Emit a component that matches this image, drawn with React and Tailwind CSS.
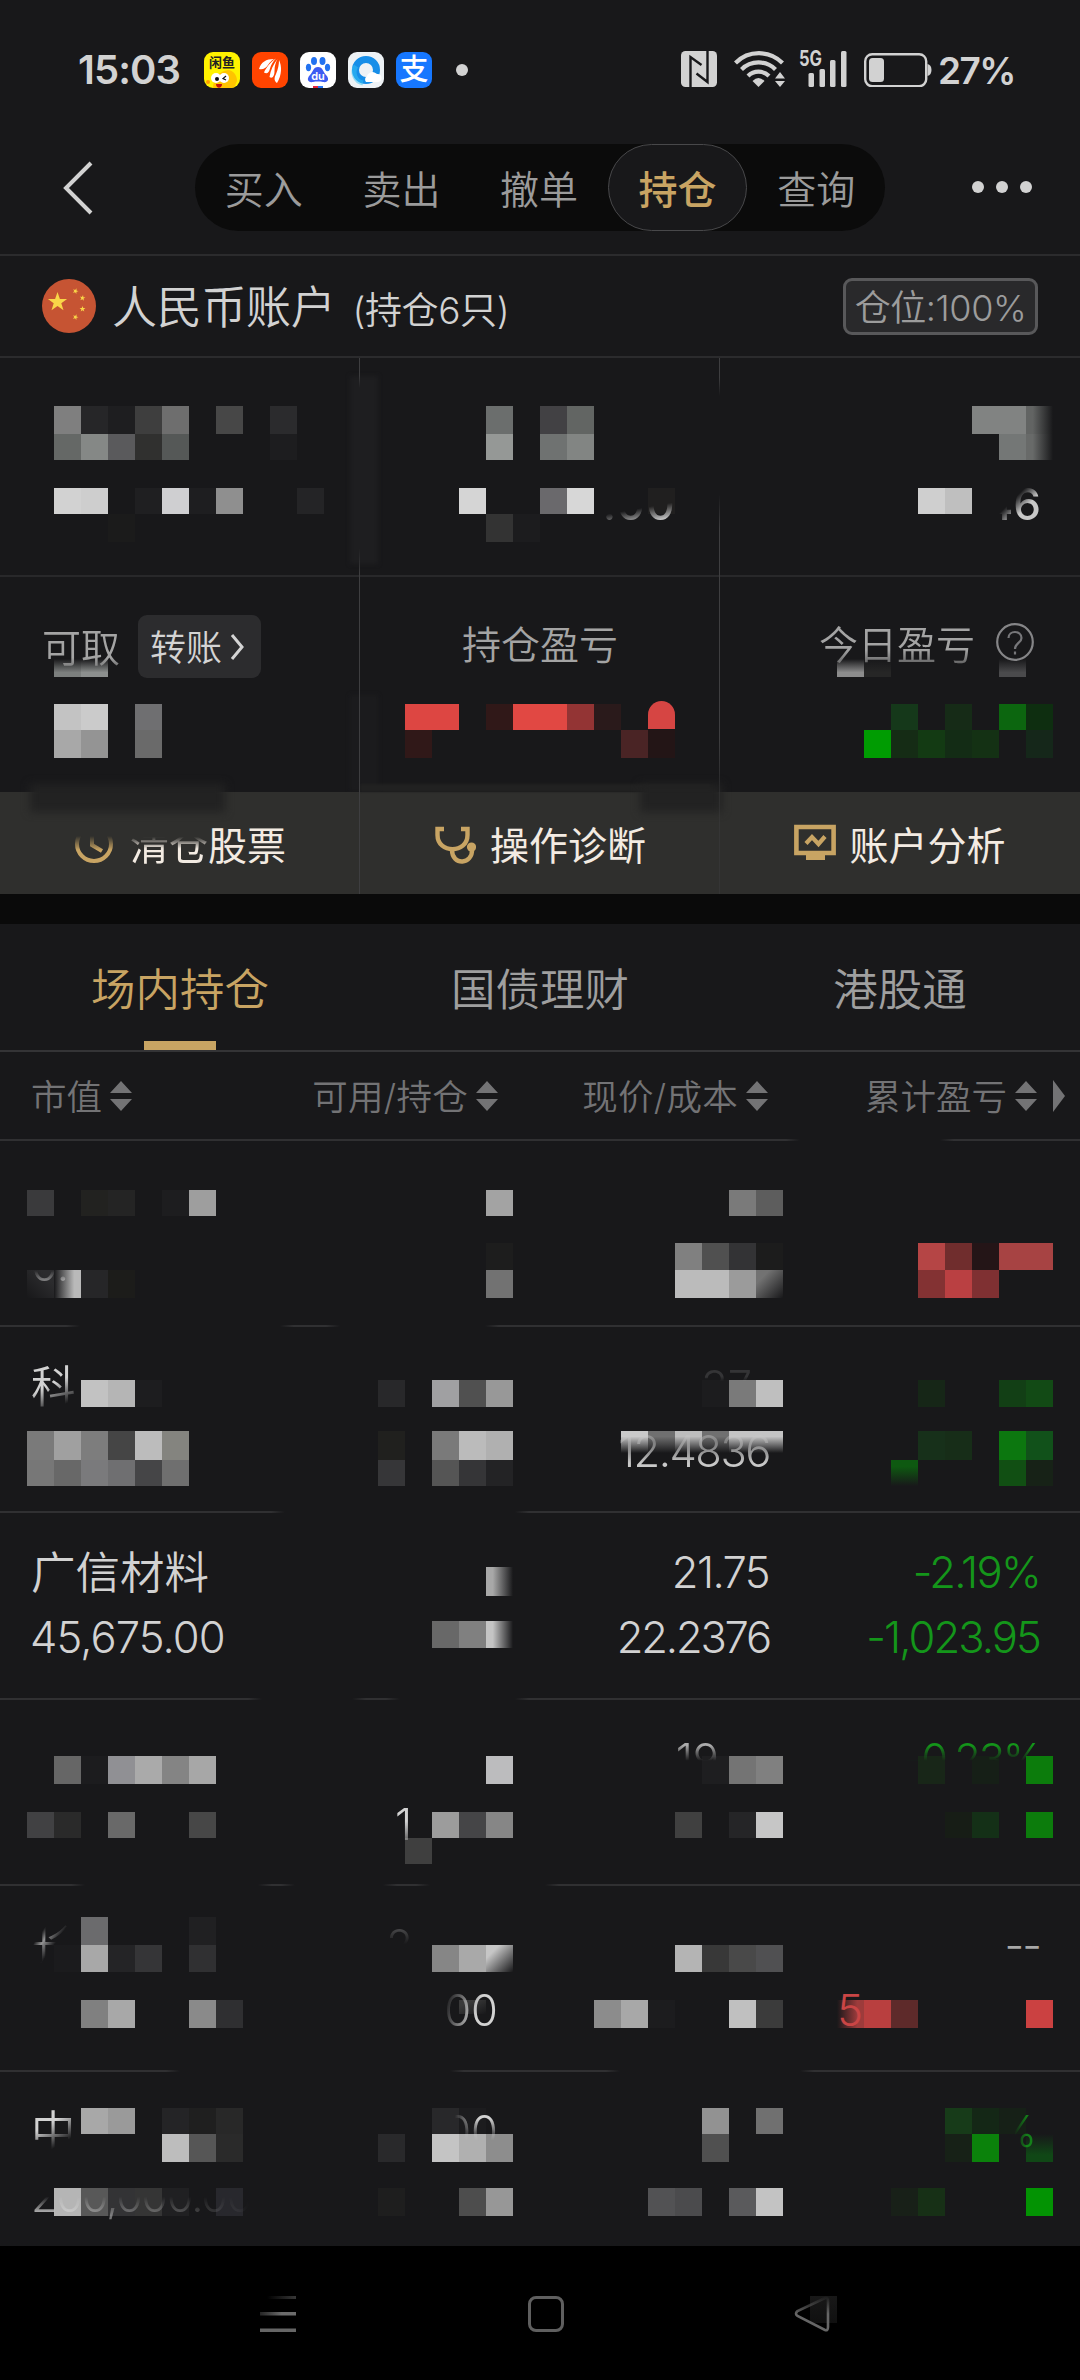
const CELL = 27;

const FADES = {
  r: 'to right',
  l: 'to left',
  t: 'to top',
  b: 'to bottom',
  d: 'to bottom right',
  e: 'to bottom left',
};

// strips: [top, height, first column, "hex hex/fade - hex"]
function Mosaic({ strips }) {
  return (
    <div className="pointer-events-none absolute inset-0">
      {strips.map(([top, height, col, colors]) =>
        colors.split(' ').map((token, i) => {
          if (token === '-') return null;
          const [hex, fade] = token.split('/');
          return (
            <div
              key={`${top}-${col + i}`}
              className="absolute"
              style={{
                left: (col + i) * CELL,
                top,
                width: CELL,
                height,
                background: fade ? `linear-gradient(${FADES[fade]}, #${hex} 25%, transparent)` : `#${hex}`,
              }}
            />
          );
        })
      )}
    </div>
  );
}

// horizontal rule that is only visible in the given [from, to] ranges
function Rule({ ranges = [[0, 1080]] }) {
  const stops = ranges.flatMap(([a, b]) => [
    `transparent ${a === 0 ? -1 : a}px`,
    `#303032 ${a === 0 ? 0 : a + 14}px`,
    `#303032 ${b === 1080 ? 1080 : b - 14}px`,
    `transparent ${b === 1080 ? 1081 : b}px`,
  ]);
  return (
    <div
      className="absolute inset-x-0 top-0 h-[2px]"
      style={{ backgroundImage: `linear-gradient(to right, ${stops.join(', ')})` }}
    />
  );
}

function StatusBar() {
  return (
    <div className="flex h-[144px] items-start pt-[51px] text-[#d2d2d2]">
      <div className="ml-[78px] w-[126px] text-[40px] leading-[37px] font-semibold tracking-[-0.9px]">15:03</div>
      <div className="flex gap-3 pt-px">
        <div className="h-9 w-9 overflow-hidden rounded-[9px] bg-[#fff200]">
          <div className="pt-[3px] text-center text-[13px] leading-[15px] font-bold text-[#222]">闲鱼</div>
          <svg viewBox="0 0 36 18" className="block h-[18px] w-9">
            <path d="M9 18C9 9 15 1 24 0c5 0 9 5 9 11l-3 7z" fill="#ffc400" />
            <circle cx="4" cy="12" r="2" fill="#ff9d00" />
            <circle cx="12" cy="8" r="5" fill="#fff" />
            <circle cx="20" cy="8" r="5" fill="#fff" />
            <circle cx="13" cy="9" r="2" fill="#111" />
            <path d="M22 6l-3 2.5 3 1.5" fill="none" stroke="#111" strokeWidth="1.2" />
            <path d="M12 14h6c0 5-6 5-6 0z" fill="#c4120c" />
          </svg>
        </div>
        <svg viewBox="0 0 36 36" className="h-9 w-9 rounded-[9px] bg-[#ff4400]">
          <g fill="#fff">
            <path d="M22 7C14 7 9 10 7 17c4 1 7-1 9-4 2-3 3-4 6-6z" />
            <path d="M24 6.500c-5 3-10 9-12 14 3 2 5 0 6-4 1-4 3-7 6-10z" />
            <path d="M25.500 7c-4 5-7 11-8 18 3 2 5-1 5-6 0-5 1-8 3-12z" />
            <path d="M27 8c3 6 3 15-2 23-3-2-3-5-1-9 2-5 3-9 3-14z" />
          </g>
        </svg>
        <svg viewBox="0 0 36 36" className="h-9 w-9 rounded-[9px] bg-white">
          <g fill="#2272f0">
            <ellipse cx="14" cy="9" rx="3" ry="4" />
            <ellipse cx="22.500" cy="9" rx="3" ry="4" />
            <ellipse cx="8.500" cy="15.500" rx="2.600" ry="3.700" />
            <ellipse cx="27.500" cy="15.500" rx="2.600" ry="3.700" />
          </g>
          <path d="M18 15c5 0 5 5 8 8 4 4 2 8-3 7-3-.6-7-.6-10 0-5 1-7-3-3-7 3-3 3-8 8-8z" fill="#3d5cf2" />
          <text x="18" y="28" textAnchor="middle" fontSize="11" fontWeight="600" fill="#fff">du</text>
          <path d="M13 34h5v2h-5z" fill="#e3223b" />
          <path d="M18 34h5v2h-5z" fill="#2272f0" />
        </svg>
        <svg viewBox="0 0 36 36" className="h-9 w-9 rounded-[9px] bg-[#eef2f5]">
          <circle cx="18" cy="18" r="10.500" fill="none" stroke="#178ee8" strokeWidth="7" />
          <path d="M8 14a11 11 0 0 0 7 17" fill="none" stroke="#35c3f5" strokeWidth="5" opacity=".5" />
          <path d="M18 30a4 4 0 0 1 1-6 6 6 0 0 1 10-2 4 4 0 0 1 1 8z" fill="#fff" />
        </svg>
        <div className="h-9 w-9 rounded-[9px] bg-[#1677ff] text-center text-[29px] leading-[35px] font-medium text-white">支</div>
      </div>
      <div className="mt-[13px] ml-6 h-3 w-3 rounded-full bg-[#d2d2d2]" />

      <svg viewBox="0 0 36 36" className="ml-[213px] h-9 w-9">
        <rect width="36" height="36" rx="4.500" fill="#d2d2d2" />
        <path d="M9.500 36V6l11 8M26.500 0v31l-11-8.500" fill="none" stroke="#18181a" strokeWidth="2.400" />
      </svg>
      <svg viewBox="0 0 52 36" className="ml-[17px] h-9 w-[52px]">
        <g fill="none" stroke="#d2d2d2" strokeWidth="4.200">
          <path d="M1.500 12a33 33 0 0 1 47 0" />
          <path d="M7.500 18.500a24 24 0 0 1 34 0" />
          <path d="M14 25a15 15 0 0 1 21 0" />
        </g>
        <path d="M24.500 36l-6-6q6-6 12 0z" fill="#d2d2d2" />
        <path d="M46 21l5 6.500H41zM46 36l5-6H41z" fill="#d2d2d2" />
      </svg>
      <svg viewBox="0 0 48 38" className="-mt-px ml-[13px] h-[38px] w-12 overflow-visible">
        <text x="0" y="16" fontSize="21" fontWeight="700" textLength="23" lengthAdjust="spacingAndGlyphs" fill="#d2d2d2">5G</text>
        <g fill="#d2d2d2">
          <rect x="9.500" y="23" width="5.500" height="14" rx="1.500" />
          <rect x="20.500" y="19" width="5.500" height="18" rx="1.500" />
          <rect x="31" y="10" width="5.500" height="27" rx="1.500" />
          <rect x="42" y="1" width="5.500" height="36" rx="1.500" />
        </g>
      </svg>
      <svg viewBox="0 0 68 36" className="ml-[17px] h-9 w-[68px]">
        <rect x="1.200" y="3.200" width="61" height="32" rx="7" fill="none" stroke="#d2d2d2" strokeWidth="2.400" />
        <rect x="5" y="7" width="15" height="24" rx="3.500" fill="#d2d2d2" />
        <path d="M63.500 13q4 1 4 6t-4 6z" fill="#d2d2d2" />
      </svg>
      <div className="ml-[6px] text-[37px] leading-[39px] font-semibold tracking-[-1.6px]">27%</div>
    </div>
  );
}

const NAV = ['买入', '卖出', '撤单', '持仓', '查询'];

function NavBar() {
  return (
    <div className="flex h-[110px] items-start">
      <svg viewBox="0 0 36 60" className="mt-[13px] ml-[60px] h-[60px] w-9">
        <path d="M31 6L6 31l25 25" fill="none" stroke="#d2d2d2" strokeWidth="4" />
      </svg>
      <div className="ml-[99px] flex h-[87px] w-[690px] rounded-full bg-[#0b0b0b]">
        {NAV.map(item => (
          <div
            key={item}
            className={
              item === '持仓'
                ? 'h-[87px] flex-1 rounded-full border border-[#48484a] bg-[#18181a] text-center text-[39px] leading-[90px] font-medium text-[#c8a463]'
                : 'h-[87px] flex-1 text-center text-[39px] leading-[92px] font-[350] text-[#9b9b9b]'
            }
          >
            {item}
          </div>
        ))}
      </div>
      <div className="mt-[37px] ml-[87px] flex gap-3">
        <div className="h-3 w-3 rounded-full bg-[#d2d2d2]" />
        <div className="h-3 w-3 rounded-full bg-[#d2d2d2]" />
        <div className="h-3 w-3 rounded-full bg-[#d2d2d2]" />
      </div>
    </div>
  );
}

const STAR = 'M0-10l2.400 7h7.200l-5.800 4.300 2.200 7L0 4l-6 4.300 2.200-7L-9.600-3h7.200z';

function Account() {
  return (
    <div className="flex h-[104px] items-center border-y-2 border-[#2b2b2d] pr-[42px] pl-[42px]">
      <svg viewBox="0 0 54 54" className="h-[54px] w-[54px]">
        <circle cx="27" cy="27" r="27" fill="#c65433" />
        <g fill="#f9d648">
          <path d={STAR} transform="translate(15.500 23)" />
          <path d={STAR} transform="translate(33.500 12) rotate(20) scale(.3)" />
          <path d={STAR} transform="translate(40.500 19) rotate(10) scale(.3)" />
          <path d={STAR} transform="translate(40.500 30) scale(.3)" />
          <path d={STAR} transform="translate(33.500 38) rotate(20) scale(.3)" />
        </g>
      </svg>
      <div className="mt-[5px] ml-4 flex items-baseline font-[350] text-[#d2d2d2]">
        <span className="text-[45px] leading-[60px] tracking-[-0.3px]">人民币账户</span>
        <span className="ml-[17px] text-[37px] tracking-[-0.4px]">(持仓6只)</span>
      </div>
      <div className="ml-auto h-[57px] w-[195px] rounded-[9px] border-[3px] border-[#58585a] bg-[#29292b] text-center text-[36px] leading-[55px] font-[350] tracking-[-0.4px] whitespace-nowrap text-[#9c9c9c]">
        仓位:100%
      </div>
    </div>
  );
}

const FUNDS = [
  [48, 28, 2, '7f7f7f 262628 1e1e20 3e3e3e 6e6e6e - 474747 - 2b2b2d'],
  [48, 28, 18, '6b6e6d - 424144 626563'],
  [48, 28, 36, '818382 818382 626463/r'],
  [76, 26, 2, '656866 858886 5a5a5c 30302f 555857 - - - 1d1d1f'],
  [76, 26, 18, '959896 - 6f7271 828583'],
  [76, 26, 37, '747776 686a69/r'],
  [130, 26, 2, 'd2d2d2 cecece - 1f1f21 cfcfd1 1e1e20 8f8f8f - - 242426'],
  [130, 26, 17, 'd5d5d5 - - 6a696c d7d7d7 - - 201f1f'],
  [130, 26, 34, 'cfcfcf bfbfbf'],
  [156, 28, 4, '1b1b1b'],
  [156, 28, 18, '333333 1c1c1e'],
];

const PROFITS = [
  [84, 18, 2, '7c7f7e/t 8c8f8e/t'],
  [84, 18, 31, '8c8c8c/t 262626/t'],
  [84, 18, 37, '4a4a4c/t'],
  [129, 26, 2, 'c3c3c3 cbcbcb - 6f6f71'],
  [129, 26, 15, 'dd4642 dd4642 - 301818 e14843 e14843 933434 2a1a1b'],
  [129, 26, 33, '15381a - 162b17 - 0c660f 0e2e10'],
  [155, 28, 2, 'a8a8a8 949494 - 6a6a6a'],
  [155, 28, 15, '301818 - - - - - - - 4a2425 231516'],
  [155, 28, 32, '009c02 152c15 133a13 132c15 143114 - 15271a'],
];

function Summary() {
  return (
    <div className="relative">
      <div className="relative grid h-[217px] grid-cols-3">
        <Mosaic strips={FUNDS} />
        <div className="pointer-events-none absolute top-[18px] left-[350px] h-[188px] w-7 bg-[#1e1e20] blur-[2px]" />
        <div />
        <div className="flex items-start justify-end pt-[117px] pr-[44px]">
          <span className="text-[44px] leading-[58px] font-medium tracking-[1.4px] text-[#c8c8c8] [mask-image:linear-gradient(170deg,transparent_56%,black_78%)]">
            .00
          </span>
        </div>
        <div className="flex items-start justify-end pt-[117px] pr-[39px]">
          <span className="text-[44px] leading-[58px] font-medium text-[#c8c8c8] [mask-image:linear-gradient(135deg,transparent_52%,black_68%)]">
            .46
          </span>
        </div>
      </div>

      <div className="relative grid h-[217px] grid-cols-3 text-[39px] leading-[48px] font-[350] text-[#a4a4a4]">
        <div className="absolute inset-x-0 top-0 h-[2px] bg-[#28282a]" />
        <Mosaic strips={PROFITS} />
        <div className="absolute top-[126px] left-[648px] h-7 w-[27px] rounded-t-full bg-[#d64543]" />
        <div className="absolute top-[120px] left-[350px] h-[96px] w-7 bg-[#1e1e20]/60 blur-[2px]" />
        <div className="relative flex items-start pt-[40px] pl-[42px]">
          <span className="mt-[9px] [mask-image:linear-gradient(to_bottom,black_70%,#0009_90%)]">可取</span>
          <div className="ml-[18px] flex h-[63px] w-[123px] items-center rounded-[9px] bg-[#2c2c2e] pt-0.5 pl-3 text-[36px] text-[#d4d4d4]">
            转账
            <svg viewBox="0 0 14 26" className="mb-0.5 ml-[8px] h-[26px] w-[14px]">
              <path d="M2 1l10 12L2 25" fill="none" stroke="#d4d4d4" strokeWidth="3" />
            </svg>
          </div>
        </div>
        <div className="relative pt-[46px] text-center">持仓盈亏</div>
        <div className="relative flex items-start justify-end pt-[46px] pr-[46px]">
          <span className="[mask-image:linear-gradient(to_bottom,black_60%,#0008_90%)]">今日盈亏</span>
          <svg viewBox="0 0 38 38" className="mt-[2px] ml-[21px] h-[38px] w-[38px]">
            <circle cx="19" cy="19" r="17.800" fill="none" stroke="#858587" strokeWidth="2.200" />
            <path d="M12.500 15c0-8 13-8 13 0 0 5-6.500 5-6.500 11M19 28.500v3" fill="none" stroke="#77777a" strokeWidth="2.200" />
          </svg>
        </div>
      </div>

      <div className="relative grid h-[102px] grid-cols-3 bg-[#2f2f2d] text-[39px] leading-[46px] font-normal text-[#f3ebe2]">
        <div className="absolute -top-2 left-[30px] h-7 w-[195px] bg-[#222222] blur-[4px]" />
        <div className="absolute -top-2 left-[360px] h-2 w-[350px] bg-[#212121] blur-[1px]" />
        <div className="absolute -top-2 left-[640px] h-7 w-[82px] bg-[#222222] blur-[4px]" />
        <div className="relative flex items-center justify-center gap-4 pt-[6px]">
          <svg viewBox="0 0 40 40" className="mb-1 h-10 w-10 [mask-image:linear-gradient(to_bottom,transparent_30%,black_65%)]">
            <path d="M20 3a17 17 0 1 0 17 17A17 17 0 0 0 20 3zM18 11v10l10 6" fill="none" stroke="#c8a463" strokeWidth="4" />
          </svg>
          <div>
            <span className="inline-block [mask-image:linear-gradient(to_bottom,transparent_30%,black_56%)]">清仓</span>
            <span>股票</span>
          </div>
        </div>
        <div className="relative flex items-center justify-center gap-[14px] pt-[5px]">
          <svg viewBox="0 0 42 40" className="mb-1 h-10 w-[42px]">
            <g fill="none" stroke="#c8a463" strokeWidth="4.400">
              <path d="M10 5H3.500v6c0 19 30 19 30 0V5H27" />
              <path d="M18 26c0 16 21 15 20-1" />
            </g>
            <circle cx="37.500" cy="23" r="4.600" fill="#c8a463" />
          </svg>
          <span>操作诊断</span>
        </div>
        <div className="relative flex items-center justify-center gap-[13px] pt-[5px]">
          <svg viewBox="0 0 42 36" className="-mt-2 h-9 w-[42px]">
            <path d="M2.400 3h37.200v26H2.400z" fill="none" stroke="#c8a463" strokeWidth="4.600" />
            <path d="M12 31h19v5H12z" fill="#c8a463" />
            <path d="M12 19.500l6-6.500 6.500 7 6.500-7.500" fill="none" stroke="#c8a463" strokeWidth="4.200" />
          </svg>
          <span>账户分析</span>
        </div>
      </div>

      <div className="absolute top-0 left-[359px] h-[536px] w-px bg-[#3e3e40] [mask-image:linear-gradient(to_bottom,black_18px,transparent_30px,transparent_190px,black_215px)]" />
      <div className="absolute top-0 left-[719px] h-[536px] w-px bg-[#3e3e40] [mask-image:linear-gradient(to_bottom,black_20px,transparent_38px,transparent_136px,black_170px,black_380px,#0006_430px)]" />
    </div>
  );
}

const TABS = ['场内持仓', '国债理财', '港股通'];

function Tabs() {
  return (
    <div className="grid h-[126px] shrink-0 grid-cols-3 text-center text-[44.5px] leading-[132px] font-[350] text-[#9f9f9f]">
      {TABS.map((tab, i) => (
        <div key={tab} className={i === 0 ? 'relative h-[126px] text-[#c8a463]' : 'h-[126px]'}>
          {tab}
          {i === 0 && <div className="absolute bottom-0 left-[144px] h-[9px] w-[72px] bg-[#c8a463]" />}
        </div>
      ))}
    </div>
  );
}

const HEADERS = ['市值', '可用/持仓', '现价/成本', '累计盈亏'];

function TableHeader() {
  return (
    <div className="relative flex h-[89px] shrink-0 items-center border-t-2 border-[#343436] pt-1 pl-[31px]">
      <div className="grid grid-cols-[186px_281px_270px_269px] text-[35.5px] leading-[44px] font-[350] text-[#737375]">
        {HEADERS.map((label, i) => (
          <div key={label} className={i === 0 ? 'flex items-center gap-2' : 'flex items-center justify-end gap-2'}>
            <span className={i > 0 && i < 3 ? 'tracking-[0.3px] whitespace-nowrap' : ''}>{label}</span>
            <svg viewBox="0 0 22 30" className="mb-1 h-[30px] w-[22px]">
              <path d="M11 0l11 12H0zM11 30L0 18h22z" fill="#737375" />
            </svg>
          </div>
        ))}
      </div>
      <svg viewBox="0 0 12 32" className="mb-1 ml-4 h-8 w-3">
        <path d="M0 0l12 16L0 32z" fill="#737375" />
      </svg>
    </div>
  );
}

const UP = 'text-[#c94545]';
const DOWN = 'text-[#14961a]';

// eight cells a row: name, available, price, profit / value, held, cost, amount
const ROWS = [
  {
    rule: [[0, 800], [940, 1080]],
    cells: [
      null,
      null,
      null,
      null,
      { text: '0.', mask: 'opacity-50 [mask-image:linear-gradient(to_bottom,transparent_58%,black_72%)]' },
      null,
      null,
      null,
    ],
    strips: [
      [51, 26, 1, '3a3a3c - 222220 242424 - 1d1d1f 9e9e9e'],
      [51, 26, 18, 'a3a3a3'],
      [51, 26, 27, '7a7a7a 5d5d5d'],
      [104, 27, 18, '1d1d1d'],
      [104, 27, 25, '808080 505050 333335 1c1c1c'],
      [104, 27, 34, 'b54545 702d2d 241517 a74343 a74343'],
      [131, 28, 1, '2c2c2e/e b9b9b9/l 262628 1c1c1a'],
      [131, 28, 18, '727272'],
      [131, 28, 25, 'bbbbbb bbbbbb 9b9b9b 727272/d'],
      [131, 28, 34, '833233 ba4042 7f3032'],
    ],
  },
  {
    rule: [[0, 80], [280, 340], [485, 1080]],
    cells: [
      { text: '科', mask: '[mask-image:linear-gradient(155deg,black_46%,transparent_76%)]' },
      null,
      { text: '.37', mask: 'mr-4 opacity-15 [mask-image:linear-gradient(to_bottom,black_35%,transparent_42%)]' },
      null,
      null,
      null,
      { text: '12.4836', color: 'text-[#c9c9c9]', mask: '-mr-0.5 tracking-[-1.5px] [mask-image:linear-gradient(to_bottom,#0006_35%,black_68%)]' },
      null,
    ],
    strips: [
      [55, 27, 3, 'c2c2c2 b5b5b5 1d1d1f'],
      [55, 27, 14, '28282a - a0a0a2 505050 989898'],
      [55, 27, 26, '1c1c1e 7a7a7a bfbfbf'],
      [55, 27, 34, '162617 - - 123f15 124a15'],
      [106, 29, 1, '7a7a7a a0a0a0 7d7d7d 454545 bcbcbc 84847f'],
      [106, 29, 14, '20201e - 7a7a7a bbbbbb b0b0b0'],
      [106, 22, 23, 'c9c9c9/b 707070/b bdbdbd/b 707070/b c4c4c4/b c4c4c4/b'],
      [106, 29, 34, '17301a 172d18 - 0c770f 11511a'],
      [135, 26, 1, '777777 686868 7a7a7c 6f6f71 454547 6f6f6f'],
      [135, 26, 14, '363638 - 555555 353537 232325'],
      [135, 26, 33, '0e5911/b - - - 114f13 172217'],
    ],
  },
  {
    rule: [[0, 285], [515, 1080]],
    cells: [
      { text: '广信材料' },
      null,
      { text: '21.75', mask: '-mr-px tracking-[-1.6px]' },
      { text: '-2.19%', color: DOWN, mask: '-mr-[3px] tracking-[-1.7px]' },
      { text: '45,675.00', mask: '-ml-px tracking-[-0.9px]' },
      null,
      { text: '22.2376', mask: '-mr-0.5 tracking-[-2.2px]' },
      { text: '-1,023.95', color: DOWN, mask: '-mr-[3px] tracking-[-1.9px]' },
    ],
    strips: [
      [56, 29, 18, 'a8a8a8/r'],
      [110, 27, 16, '686868 808080 c4c4c4/r'],
    ],
  },
  {
    rule: [[0, 262], [352, 400], [515, 1080]],
    cells: [
      null,
      null,
      { text: '19', mask: 'mr-[49px] [mask-image:linear-gradient(to_bottom,#000c_28%,transparent_52%)]' },
      { text: '-0.23%', color: DOWN, mask: '-mr-1 tracking-[-2.4px] [mask-image:linear-gradient(to_bottom,black_28%,transparent_52%)]' },
      null,
      { text: '1', mask: 'mr-[86px] [mask-image:linear-gradient(to_bottom,black_45%,#0006_75%)]' },
      null,
      null,
    ],
    strips: [
      [58, 28, 2, '666666 1c1c1e 909094 aaaaaa 848484 a7a7a7'],
      [58, 28, 18, 'bcbcbe'],
      [58, 28, 26, '1e1e20 747474 808080'],
      [58, 28, 34, '182618 - 161f17 - 0c7c0c'],
      [114, 26, 1, '414143 2a2a2a - 696969 - - 474747'],
      [114, 26, 16, '9c9c9c 454547 868686'],
      [114, 26, 25, '404040 - 252527 c6c6c6'],
      [114, 26, 35, '171d16 143017 - 0c7c0c'],
      [140, 26, 15, '3f3f3f'],
    ],
  },
  {
    rule: [[0, 85], [258, 295], [383, 430], [545, 1080]],
    cells: [
      { text: '长', mask: '[mask-image:linear-gradient(125deg,transparent_26%,#000a_35%,transparent_50%)]' },
      { text: '2', mask: 'mr-[85px] opacity-30 [mask-image:linear-gradient(to_bottom,black_20%,transparent_48%)]' },
      null,
      { text: '--', color: 'text-[#a8a8a8]', mask: 'tracking-[-2px] -mr-[3px]' },
      null,
      { text: '00', mask: '[mask-image:linear-gradient(105deg,transparent_10%,black_60%)]' },
      null,
      { text: '5', color: UP, mask: 'mr-[174px]' },
    ],
    strips: [
      [33, 28, 3, '6b6b6d - - - 202022'],
      [61, 27, 2, '1b1b1d a8a8a8 242426 353537 - 303032'],
      [61, 27, 16, '868686 a9a9a9 c6c6c6/d'],
      [61, 27, 25, 'b4b4b4 383838 494949 505052'],
      [116, 28, 3, '808080 a8a8a8 - - 8a8a8a 2f2f31'],
      [116, 14, 17, '3a3a3a/d'],
      [116, 28, 22, '8c8c8c a8a8a8 1c1c1e - - c0c0c0 3b3b3b'],
      [116, 28, 31, '9d3b3b/l b93f3f 5e2a2a'],
      [116, 28, 38, 'cb4141'],
    ],
  },
  {
    rule: [[0, 180], [450, 620], [800, 1080]],
    cells: [
      { text: '中', mask: '[mask-image:linear-gradient(150deg,black_38%,transparent_68%)]' },
      { text: '00', mask: '[mask-image:linear-gradient(to_bottom,black_30%,transparent_64%),linear-gradient(to_right,transparent_20%,black_60%)] [mask-composite:intersect]' },
      null,
      { text: '%', color: DOWN, mask: 'opacity-80 [mask-image:linear-gradient(to_right,transparent_45%,black_75%)]' },
      { text: '200,000.00', mask: 'tracking-[-1.4px] [mask-image:linear-gradient(to_bottom,transparent_50%,black_80%),linear-gradient(to_right,black_10%,#0008_30%,#0005_70%,transparent)] [mask-composite:intersect]' },
      null,
      null,
      null,
    ],
    strips: [
      [38, 26, 3, 'a8a8a8 9a9a9a - 242426 1f1f1f 282828'],
      [38, 26, 16, '28282a 1c1c1e'],
      [38, 26, 26, '929292 - 707070'],
      [38, 26, 35, '173b19 142716 162017'],
      [64, 28, 6, 'bdbdbd 565656 2a2a2a'],
      [64, 28, 14, '29292b - c4c4c4 b0b0b0 8d8d8d'],
      [64, 28, 26, '505050'],
      [64, 28, 35, '172117 0b820b - 104716/t'],
      [118, 28, 2, 'b5b5b5 585858 333335 353535 202022 - 28282d'],
      [118, 28, 14, '1e1e1e - - 4d4d4d 979797'],
      [118, 28, 24, '525254 4b4b4d - 5a5a5c c3c3c3'],
      [118, 28, 33, '182018 173016'],
      [118, 28, 38, '039303'],
    ],
  },
];

function Row({ rule, cells, strips }) {
  return (
    <div className="relative h-[186.200px] shrink-0 pt-[29px] pl-[31px]">
      <Rule ranges={rule} />
      <Mosaic strips={strips} />
      <div className="relative grid auto-rows-[65px] grid-cols-[186px_281px_270px_269px] text-[43.5px] leading-[65px] font-[350]">
        {cells.map((cell, i) => (
          <div key={i} className={i % 4 === 0 ? 'text-left whitespace-nowrap' : 'text-right whitespace-nowrap'}>
            {cell && (
              <span
                className={`inline-block ${i === 0 ? 'pt-px text-[44.5px]' : ''} ${cell.color || 'text-[#d2d2d2]'} ${cell.mask || ''}`}
              >
                {cell.text}
              </span>
            )}
          </div>
        ))}
      </div>
    </div>
  );
}

function SystemNav() {
  return (
    <div className="relative flex h-[134px] shrink-0 items-start bg-black pt-[48px]">
      <svg viewBox="0 0 36 40" className="ml-[260px] h-10 w-9">
        <defs>
          <linearGradient id="menuFade" x1="0" x2="1">
            <stop offset=".2" stopColor="#5c5c5c" stopOpacity="0" />
            <stop offset="1" stopColor="#5c5c5c" stopOpacity=".6" />
          </linearGradient>
          <linearGradient id="menuFade2" x1="0" x2="1">
            <stop offset="0" stopColor="#5c5c5c" stopOpacity=".4" />
            <stop offset=".6" stopColor="#6c6c6c" />
          </linearGradient>
        </defs>
        <rect y="2" width="36" height="3" fill="url(#menuFade)" />
        <rect y="18" width="36" height="3.500" fill="url(#menuFade2)" />
        <rect y="34.500" width="36" height="3.500" fill="#666" />
      </svg>
      <div className="mt-[2px] ml-[232px] h-9 w-9 rounded-[8px] border-[3px] border-[#5f5f5f]" />
      <svg viewBox="0 0 44 40" className="ml-[230px] h-10 w-11">
        <defs>
          <linearGradient id="backFade" x1="0" x2="0" y1="0" y2="1">
            <stop offset="0" stopColor="#666" stopOpacity=".1" />
            <stop offset=".5" stopColor="#666" />
          </linearGradient>
          <linearGradient id="backBox" x1="0" x2="0" y1="0" y2="1">
            <stop offset="0" stopColor="#181818" />
            <stop offset="1" stopColor="#101010" />
          </linearGradient>
        </defs>
        <rect x="16" y="2" width="27" height="27" fill="url(#backBox)" />
        <path d="M31 4L3.500 17q-3 3 0 5L31 36q3 1 3-3V7q0-4-3-3z" fill="none" stroke="url(#backFade)" strokeWidth="2.600" />
      </svg>
    </div>
  );
}

export default function App() {
  return (
    <div className="flex h-[2380px] w-[1080px] flex-col overflow-hidden bg-[#18181a] font-['Inter','Noto_Sans_CJK_SC',sans-serif]">
      <StatusBar />
      <NavBar />
      <Account />
      <Summary />
      <div className="h-[30px] shrink-0 bg-[#0a0a0a]" />
      <Tabs />
      <TableHeader />
      <div className="flex h-[1107px] shrink-0 flex-col overflow-hidden">
        {ROWS.map((row, i) => (
          <Row key={i} {...row} />
        ))}
      </div>
      <SystemNav />
    </div>
  );
}
